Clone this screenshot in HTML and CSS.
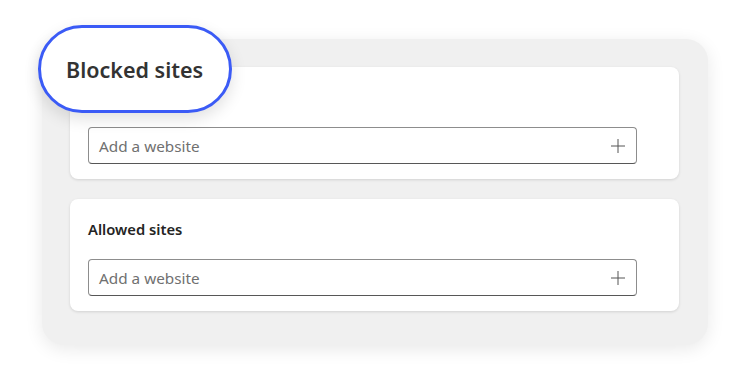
FILE: index.html
```
<!DOCTYPE html>
<html>
<head>
<meta charset="utf-8">
<link rel="stylesheet" href="styles.css">
</head>
<body>
<div class="stage">
  <div class="panel">
    <section class="card card-blocked">
      <div class="field">
        <span class="placeholder">Add a website</span>
        <svg class="plus" width="16" height="16" viewBox="0 0 16 16"><path d="M8 1v14M1 8h14" stroke="#555" stroke-width="1" fill="none"/></svg>
      </div>
    </section>
    <section class="card">
      <h2 class="card-title">Allowed sites</h2>
      <div class="field">
        <span class="placeholder">Add a website</span>
        <svg class="plus" width="16" height="16" viewBox="0 0 16 16"><path d="M8 1v14M1 8h14" stroke="#555" stroke-width="1" fill="none"/></svg>
      </div>
    </section>
  </div>
  <div class="pill">Blocked sites</div>
</div>
</body>
</html>
```
FILE: styles.css
```
html, body {
  margin: 0;
  padding: 0;
  background: #ffffff;
  font-family: "Noto Sans", "Open Sans", sans-serif;
}
.stage {
  position: relative;
  width: 750px;
  height: 386px;
  padding: 39px 0 0 42px;
  box-sizing: border-box;
}
.panel {
  width: 666px;
  height: 306px;
  box-sizing: border-box;
  background: #f0f0f0;
  border-radius: 22px;
  box-shadow: 0 4px 18px rgba(0, 0, 0, 0.09);
  padding: 28px 29px 0 28px;
  display: flex;
  flex-direction: column;
  gap: 20px;
}
.card {
  background: #ffffff;
  border-radius: 8px;
  box-shadow: 0 1px 3px rgba(0, 0, 0, 0.13);
  height: 112px;
  box-sizing: border-box;
  padding: 20px 42px 0 18px;
  display: flex;
  flex-direction: column;
  gap: 20px;
}
.card-blocked {
  padding-top: 60px;
}
.card-title {
  margin: 0;
  font-size: 14.75px;
  line-height: 20px;
  font-weight: 600;
  color: #242424;
}
.field {
  height: 37px;
  box-sizing: border-box;
  border: 1px solid #8d8d8d;
  border-bottom-color: #575757;
  border-radius: 4px;
  display: flex;
  align-items: center;
  justify-content: space-between;
  padding: 0 10px 0 10px;
}
.placeholder {
  font-size: 15.3px;
  color: #707070;
}
.plus {
  display: block;
}
.pill {
  position: absolute;
  left: 38px;
  top: 25px;
  width: 194px;
  height: 88px;
  box-sizing: border-box;
  border: 3px solid #3b5bf6;
  border-radius: 44px;
  background: #ffffff;
  box-shadow: 0 6px 16px rgba(0, 0, 0, 0.12);
  display: flex;
  align-items: center;
  padding-left: 25px;
  font-size: 21.5px;
  font-weight: 600;
  color: #333333;
}
```
